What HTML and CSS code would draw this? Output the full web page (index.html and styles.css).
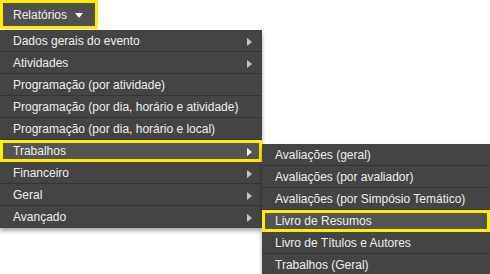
FILE: index.html
```html
<!DOCTYPE html>
<html lang="pt-BR">
<head>
    <meta charset="utf-8">
    <title>Relatórios</title>
    <link rel="stylesheet" href="styles.css">
</head>
<body>
<div class="nav">
    <button class="nav-btn mark" type="button">Relatórios <span class="caret"></span></button>
    <ul class="menu">
        <li class="item has-sub">Dados gerais do evento</li>
        <li class="item has-sub">Atividades</li>
        <li class="item">Programação (por atividade)</li>
        <li class="item">Programação (por dia, horário e atividade)</li>
        <li class="item">Programação (por dia, horário e local)</li>
        <li class="item has-sub active mark">Trabalhos
            <ul class="menu submenu">
                <li class="item">Avaliações (geral)</li>
                <li class="item">Avaliações (por avaliador)</li>
                <li class="item">Avaliações (por Simpósio Temático)</li>
                <li class="item active mark">Livro de Resumos</li>
                <li class="item">Livro de Títulos e Autores</li>
                <li class="item">Trabalhos (Geral)</li>
            </ul>
        </li>
        <li class="item has-sub">Financeiro</li>
        <li class="item has-sub">Geral</li>
        <li class="item has-sub">Avançado</li>
    </ul>
</div>
</body>
</html>
```

FILE: styles.css
```css
body {
    margin: 0;
    padding: 0;
    min-height: 274px;
    overflow: hidden;
    background: #fff;
    font-family: "Liberation Sans", Arial, sans-serif;
    font-size: 12px;
    color: #eee;
}

.nav {
    display: flex;
    flex-direction: column;
    align-items: flex-start;
    min-height: 274px;
}

.nav-btn {
    display: flex;
    align-items: center;
    gap: 8px;
    width: 98px;
    height: 29px;
    margin: 0 0 1px 0;
    padding: 1px 0 0 13px;
    border: 0;
    background: #505050;
    color: #eee;
    font: inherit;
    text-align: left;
}

.caret {
    width: 0;
    height: 0;
    margin-top: 1px;
    border-left: 4.5px solid transparent;
    border-right: 4.5px solid transparent;
    border-top: 5px solid #fff;
}

.mark {
    outline: 3px solid #ffee00;
    outline-offset: -3px;
}

.menu {
    list-style: none;
    margin: 0;
    padding: 0;
    width: 262px;
    background: #444;
    box-shadow: 0 3px 4px rgba(0, 0, 0, 0.35);
}

.item {
    position: relative;
    height: 21px;
    line-height: 23px;
    padding-left: 13px;
    border-bottom: 1px solid #333;
    white-space: nowrap;
}

.item:last-child {
    border-bottom: 0;
    height: 22px;
}

.has-sub::after {
    content: "";
    position: absolute;
    right: 10px;
    top: 8px;
    border-top: 4px solid transparent;
    border-bottom: 4px solid transparent;
    border-left: 5px solid #c4c4c4;
}

.item.active {
    background: #555;
}

.has-sub.active::after {
    border-left-color: #fff;
}

/* flyout */
.submenu {
    position: absolute;
    top: 4px;
    left: 100%;
    width: 228px;
    line-height: normal;
    z-index: 2;
}

.submenu .item {
    border-bottom: 1px solid #333;
    height: 21px;
}
```
